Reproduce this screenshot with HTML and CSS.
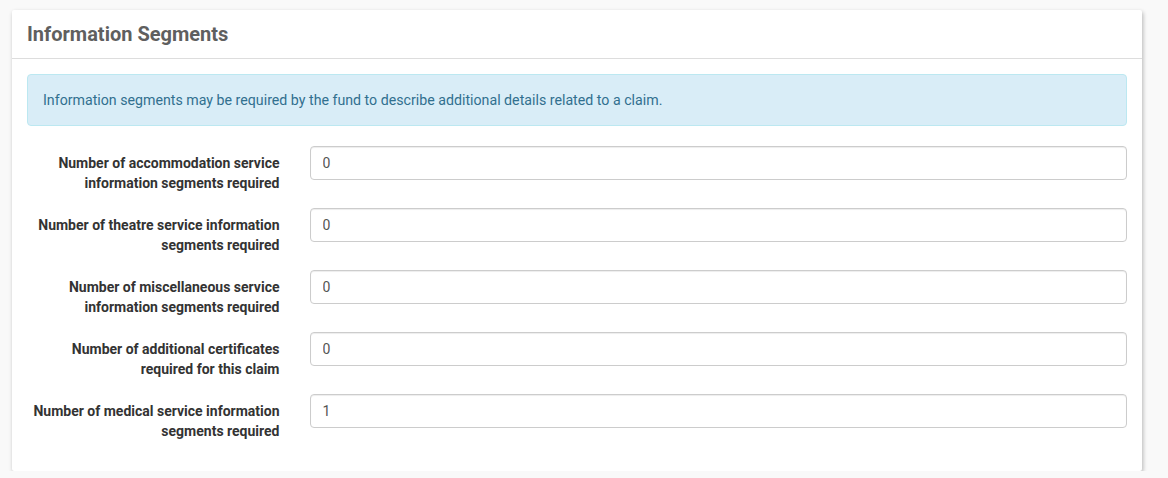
FILE: index.html
```html
<!DOCTYPE html>
<html lang="en">
<head>
    <meta charset="UTF-8">
    <title>Information Segments</title>
    <link rel="stylesheet" href="styles.css">
</head>
<body>
    <div class="page">
        <div class="panel">
            <div class="panel-heading">
                <h3 class="panel-title">Information Segments</h3>
            </div>
            <div class="panel-body">
                <div class="alert-info">
                    Information segments may be required by the fund to describe additional details related to a claim.
                </div>
                <form class="form-horizontal">
                    <div class="form-group">
                        <label for="accom">Number of accommodation service information segments required</label>
                        <div class="field"><input type="text" id="accom" value="0"></div>
                    </div>
                    <div class="form-group">
                        <label for="theatre">Number of theatre service information segments required</label>
                        <div class="field"><input type="text" id="theatre" value="0"></div>
                    </div>
                    <div class="form-group">
                        <label for="misc">Number of miscellaneous service information segments required</label>
                        <div class="field"><input type="text" id="misc" value="0"></div>
                    </div>
                    <div class="form-group">
                        <label for="certs">Number of additional certificates required for this claim</label>
                        <div class="field"><input type="text" id="certs" value="0"></div>
                    </div>
                    <div class="form-group">
                        <label for="medical">Number of medical service information segments required</label>
                        <div class="field"><input type="text" id="medical" value="1"></div>
                    </div>
                </form>
            </div>
        </div>
    </div>
</body>
</html>
```

FILE: styles.css
```css
body {
    margin: 0;
    font-family: Roboto, "Liberation Sans", sans-serif;
    font-size: 14px;
    line-height: 20px;
    color: #333;
    background-color: #f9f9f9;
}

.page {
    padding: 10px 26px 0 12px;
}

.panel {
    background-color: #fff;
    border-radius: 2px;
    box-shadow: 1px 2px 4px rgba(0,0,0,0.28);
}

.panel-heading {
    padding: 10px 15px;
    border-bottom: 1px solid #ddd;
}

.panel-title {
    margin: 0;
    font-size: 20px;
    line-height: 28px;
    font-weight: bold;
    color: #5f5f5f;
}

.panel-body {
    padding: 15px;
}

.alert-info {
    padding: 15px;
    margin-bottom: 20px;
    background-color: #d9edf7;
    border: 1px solid #bce8f1;
    border-radius: 4px;
    color: #31708f;
    font-size: 14.2px;
}

.form-group {
    display: flex;
    margin: 0 -15px 15px;
}

.form-group label {
    box-sizing: border-box;
    width: 25%;
    padding: 7px 15px 0;
    text-align: right;
    font-weight: bold;
}

.field {
    flex: 1;
    padding: 0 15px;
}

.field input {
    box-sizing: border-box;
    width: 100%;
    height: 34px;
    padding: 6px 12px;
    font-family: inherit;
    font-size: 14px;
    color: #555;
    border: 1px solid #ccc;
    border-radius: 4px;
    box-shadow: inset 0 1px 1px rgba(0,0,0,0.075);
}
```
